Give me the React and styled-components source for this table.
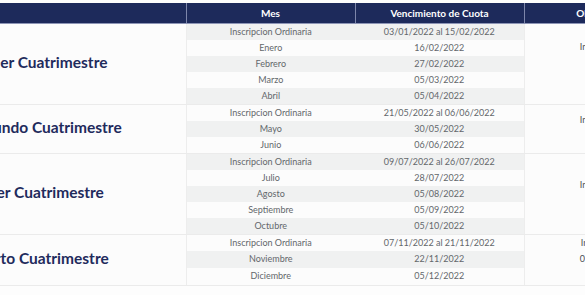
import React from "react";
import styled, { createGlobalStyle } from "styled-components";

const GlobalStyle = createGlobalStyle`
  html, body {
    margin: 0;
    padding: 0;
    background: #fdfdfd;
  }
  body {
    font-family: Lato, "Open Sans", sans-serif;
  }
`;

const Viewport = styled.div`
  width: 585px;
  height: 295px;
  overflow: hidden;
  padding-top: 3px;
  box-sizing: border-box;
  background: #fdfdfd;
`;

const Table = styled.table`
  margin-left: -52px;
  width: 746px;
  border-collapse: collapse;
  table-layout: fixed;
  background: #fcfcfc;
`;

const HeadCell = styled.th`
  height: 20px;
  padding: 0;
  background: #1d2a5b;
  color: #ffffff;
  font-size: 10px;
  font-weight: 700;
  text-align: center;
  border-bottom: 1px solid #8d95b6;
  border-left: ${p => (p.$first ? "none" : "1px solid #7d86ab")};
  box-sizing: border-box;
`;

const Row = styled.tr`
  &:nth-child(odd) td.stripe {
    background: #f0f1f1;
  }
  td {
    border-bottom: ${p => (p.$last ? "1px solid #ebebeb" : "none")};
  }
`;

const TitleCell = styled.td`
  padding: 0 0 4px 20px;
  vertical-align: middle;
  text-align: left;
  background: #fcfcfc;
  color: #1f2b5c;
  font-size: 15.5px;
  font-weight: 700;
  border-right: 1px solid #ededed;
  border-bottom: 1px solid #ebebeb !important;
  white-space: nowrap;
`;

const Cell = styled.td`
  height: 16px;
  padding: 0;
  font-size: 9px;
  font-weight: 400;
  line-height: 16px;
  color: #63676b;
  text-align: center;
  white-space: nowrap;
`;

const NoteCell = styled.td`
  padding: 0 0 2px;
  vertical-align: middle;
  text-align: center;
  background: #fcfcfc;
  color: #4a4e52;
  font-size: 9px;
  line-height: 16px;
  border-left: 1px solid #ededed;
  border-bottom: 1px solid #ebebeb !important;
`;

const NoteLine = styled.div`
  white-space: nowrap;
`;

const groups = [
  {
    title: "Primer Cuatrimestre",
    notes: ["Inicio de clases", "07/03", "al 30/06"],
    rows: [
      ["Inscripcion Ordinaria", "03/01/2022 al 15/02/2022"],
      ["Enero", "16/02/2022"],
      ["Febrero", "27/02/2022"],
      ["Marzo", "05/03/2022"],
      ["Abril", "05/04/2022"],
    ],
  },
  {
    title: "Segundo Cuatrimestre",
    notes: ["Inicio de clases", "13/06"],
    rows: [
      ["Inscripcion Ordinaria", "21/05/2022 al 06/06/2022"],
      ["Mayo", "30/05/2022"],
      ["Junio", "06/06/2022"],
    ],
  },
  {
    title: "Tercer Cuatrimestre",
    notes: ["Inicio de clases", "01/08"],
    rows: [
      ["Inscripcion Ordinaria", "09/07/2022 al 26/07/2022"],
      ["Julio", "28/07/2022"],
      ["Agosto", "05/08/2022"],
      ["Septiembre", "05/09/2022"],
      ["Octubre", "05/10/2022"],
    ],
  },
  {
    title: "Cuarto Cuatrimestre",
    notes: ["Inscripción del", "07/11/2022 al", "21/11"],
    rows: [
      ["Inscripcion Ordinaria", "07/11/2022 al 21/11/2022"],
      ["Noviembre", "22/11/2022"],
      ["Diciembre", "05/12/2022"],
    ],
  },
];

export default function App() {
  return (
    <>
      <GlobalStyle />
      <Viewport>
        <Table>
          <colgroup>
            <col style={{ width: 238 }} />
            <col style={{ width: 169 }} />
            <col style={{ width: 169 }} />
            <col style={{ width: 170 }} />
          </colgroup>
          <thead>
            <tr>
              <HeadCell $first />
              <HeadCell>Mes</HeadCell>
              <HeadCell>Vencimiento de Cuota</HeadCell>
              <HeadCell>Observaciones</HeadCell>
            </tr>
          </thead>
          <tbody>
            {groups.flatMap(g =>
              g.rows.map((r, i) => (
                <Row key={g.title + r[0]} $last={i === g.rows.length - 1}>
                  {i === 0 && (
                    <TitleCell rowSpan={g.rows.length}>{g.title}</TitleCell>
                  )}
                  <Cell className="stripe">{r[0]}</Cell>
                  <Cell className="stripe">{r[1]}</Cell>
                  {i === 0 && (
                    <NoteCell rowSpan={g.rows.length}>
                      {g.notes.map(n => (
                        <NoteLine key={n}>{n}</NoteLine>
                      ))}
                    </NoteCell>
                  )}
                </Row>
              ))
            )}
          </tbody>
        </Table>
      </Viewport>
    </>
  );
}
